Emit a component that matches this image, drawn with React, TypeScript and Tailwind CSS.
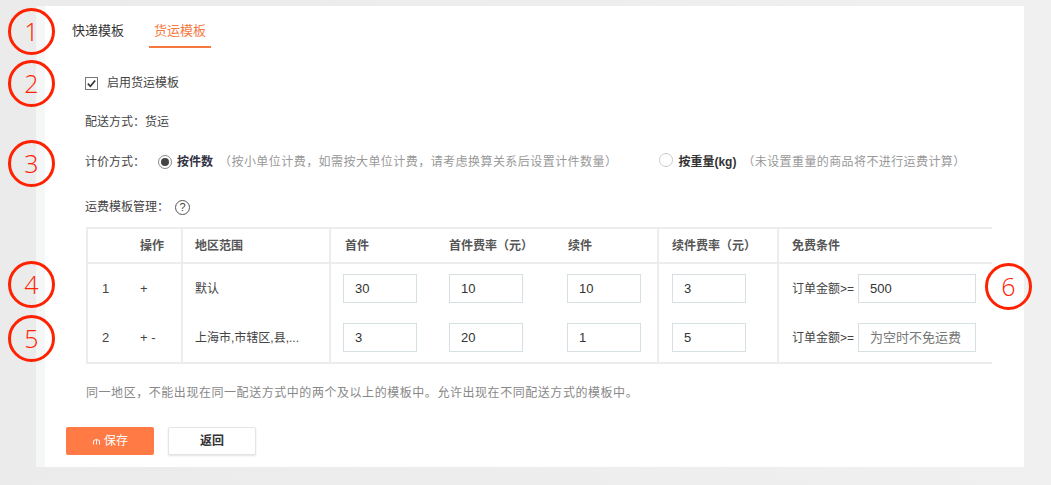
import React from 'react';

const font = 'font-["Liberation_Sans","Noto_Sans_CJK_SC",sans-serif]';

const Mark = ({ n, className }: { n: number; className: string }) => (
  <div
    className={`absolute w-[47px] h-[47px] rounded-full border-[3px] border-[#ff2200] flex items-center justify-center text-[#ff2200] text-[25px] font-light font-["Open_Sans",sans-serif] leading-none ${className}`}
  >
    {n}
  </div>
);

const Radio = ({ checked }: { checked: boolean }) => (
  <span
    className={`inline-flex w-[14px] h-[14px] rounded-full border items-center justify-center ${checked ? 'border-[#888]' : 'border-[#ccc]'}`}
  >
    {checked && <span className="w-[8px] h-[8px] rounded-full bg-[#444]" />}
  </span>
);

const Cell = ({
  children,
  border,
  className = '',
}: {
  children?: React.ReactNode;
  border?: boolean;
  className?: string;
}) => (
  <div className={`flex items-center ${border ? 'border-l-2 border-[#ececec]' : ''} ${className}`}>
    {children}
  </div>
);

const Input = ({ value, w = 'w-[74px]', placeholder }: { value?: string; w?: string; placeholder?: string }) => (
  <div className={`${w} h-[29px] border border-[#d6dfe2] flex items-center pl-[11px] text-[13px] ${placeholder ? 'text-[#777]' : 'text-[#333]'}`}>
    {value ?? placeholder}
  </div>
);

const rows = [
  { idx: '1', ops: '+', area: '默认', first: '30', firstFee: '10', next: '10', nextFee: '3', free: '500' },
  { idx: '2', ops: '+ -', area: '上海市,市辖区,县,...', first: '3', firstFee: '20', next: '1', nextFee: '5', free: '' },
];

export default function App() {
  return (
    <div className={`relative w-[1051px] h-[485px] overflow-hidden bg-gradient-to-r from-[#ebebeb] to-[#f0f0f0] ${font}`}>
      <div className="pt-[6px] pl-[36px]">
        <div className="w-[988px] h-[461px] bg-[#f5f6f6] pl-[9px]">
          <div className="h-full bg-white flex flex-col">
            {/* tabs */}
            <div className="flex gap-[20px] ml-[22px] h-[42px]">
              <div className="px-[5px] pt-[17px] text-[13px] leading-[16px] text-[#333]">快递模板</div>
              <div className="px-[5px] pt-[17px] text-[13px] leading-[16px] text-[#f7783e] border-b-2 border-[#f7783e]">货运模板</div>
            </div>

            <div className="ml-[40px] mt-[25px] h-[20px] flex items-center gap-[9px] text-[12px] text-[#444]">
              <span className="w-[13px] h-[13px] border border-[#777] flex items-center justify-center">
                <svg viewBox="0 0 12 12" className="w-[11px] h-[11px]">
                  <path d="M2 6.2 L4.8 9 L10 2.8" fill="none" stroke="#333" strokeWidth="1.8" />
                </svg>
              </span>
              启用货运模板
            </div>

            <div className="ml-[40px] mt-[19px] h-[20px] flex items-center text-[12px] text-[#444]">
              配送方式：货运
            </div>

            <div className="ml-[40px] mt-[20px] h-[20px] flex items-center text-[12px] text-[#444]">
              <span className="w-[73px]">计价方式：</span>
              <Radio checked />
              <span className="ml-[5px] font-semibold text-[#334]">按件数</span>
              <span className="ml-[6px] text-[#999] tracking-[0.45px]">（按小单位计费，如需按大单位计费，请考虑换算关系后设置计件数量）</span>
              <span className="ml-[42px]"><Radio checked={false} /></span>
              <span className="ml-[5px] font-semibold text-[#333]">按重量(kg)</span>
              <span className="ml-[6px] text-[#999] tracking-[0.4px]">（未设置重量的商品将不进行运费计算）</span>
            </div>

            <div className="ml-[40px] mt-[25px] h-[20px] flex items-center text-[12px] text-[#444]">
              运费模板管理：
              <span className="ml-[6px] w-[15px] h-[15px] rounded-full border border-[#555] flex items-center justify-center text-[11px] leading-none text-[#444]">?</span>
            </div>

            {/* table */}
            <div className="ml-[41px] mt-[10px] w-[906px] border-t-2 border-b-2 border-[#ececec] text-[12px]">
              <div className="grid grid-cols-[44px_51px_148px_103px_120px_105px_120px_215px] h-[35px] border-b-2 border-[#ececec] font-semibold text-[#555]">
                <Cell border />
                <Cell className="pl-[10px]">操作</Cell>
                <Cell border className="pl-[12px]">地区范围</Cell>
                <Cell border className="pl-[14px]">首件</Cell>
                <Cell className="pl-[17px]">首件费率（元）</Cell>
                <Cell className="pl-[16px]">续件</Cell>
                <Cell border className="pl-[13px]">续件费率（元）</Cell>
                <Cell border className="pl-[13px]">免费条件</Cell>
              </div>
              {rows.map((r) => (
                <div key={r.idx} className="grid grid-cols-[44px_51px_148px_103px_120px_105px_120px_215px] h-[49px] text-[#444]">
                  <Cell border className="pl-[14px] text-[13px]">{r.idx}</Cell>
                  <Cell className="pl-[10px] text-[13px]">{r.ops}</Cell>
                  <Cell border className="pl-[12px]">{r.area}</Cell>
                  <Cell border className="pl-[12px]"><Input value={r.first} /></Cell>
                  <Cell className="pl-[17px]"><Input value={r.firstFee} /></Cell>
                  <Cell className="pl-[15px]"><Input value={r.next} /></Cell>
                  <Cell border className="pl-[13px]"><Input value={r.nextFee} /></Cell>
                  <Cell border className="pl-[13px]">
                    <span className="w-[66px]">订单金额&gt;=</span>
                    {r.free ? <Input value={r.free} w="w-[118px]" /> : <Input placeholder="为空时不免运费" w="w-[118px]" />}
                  </Cell>
                </div>
              ))}
            </div>

            <div className="ml-[41px] mt-[19px] h-[20px] flex items-center text-[12px] text-[#888] tracking-[0.55px]">
              同一地区，不能出现在同一配送方式中的两个及以上的模板中。允许出现在不同配送方式的模板中。
            </div>

            <div className="ml-[21px] mt-[24px] flex gap-[14px]">
              <button className="w-[88px] h-[28px] rounded-[2px] bg-[#ff7a45] text-white text-[12px] flex items-center justify-center gap-[3px]">
                <svg viewBox="0 0 12 12" className="w-[9px] h-[9px]">
                  <path d="M2 10 L2 5 Q6 1 10 5 L10 10 M6 4 L6 10" fill="none" stroke="#fff" strokeWidth="1.3" />
                </svg>
                保存
              </button>
              <button className="w-[88px] h-[28px] rounded-[2px] bg-white border border-[#e2e6e8] shadow-[0_1px_2px_rgba(0,0,0,0.12)] text-[#333] text-[12px] font-semibold flex items-center justify-center">
                返回
              </button>
            </div>
          </div>
        </div>
      </div>

      <Mark n={1} className="left-[8px] top-[8px]" />
      <Mark n={2} className="left-[8px] top-[60px]" />
      <Mark n={3} className="left-[8px] top-[140px]" />
      <Mark n={4} className="left-[8px] top-[261px]" />
      <Mark n={5} className="left-[8px] top-[315px]" />
      <Mark n={6} className="left-[985px] top-[263px]" />
    </div>
  );
}
